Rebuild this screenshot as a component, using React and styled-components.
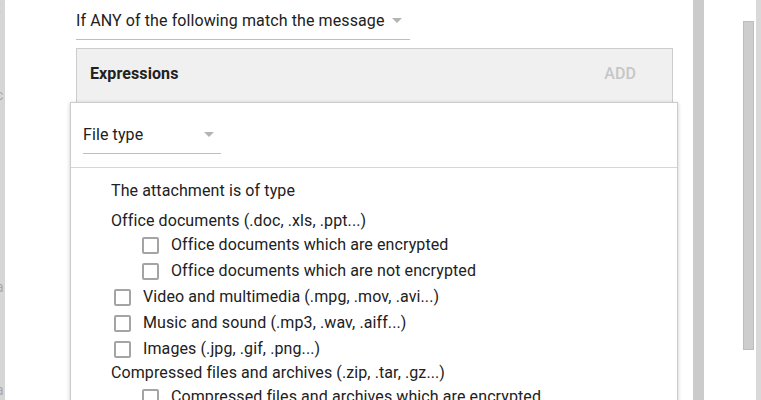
import styled, { createGlobalStyle } from "styled-components"

const Global = createGlobalStyle`
  html, body {
    margin: 0;
    padding: 0;
    background: #ffffff;
    font-family: Roboto, "Liberation Sans", sans-serif;
    color: #212121;
  }
`

const Screen = styled.div`
  display: flex;
  height: 400px;
  width: 761px;
  overflow: hidden;
`

const BackPage = styled.div`
  width: 5px;
  flex-shrink: 0;
  background: #d6d6d6;
  overflow: hidden;
  display: flex;
  flex-direction: column;
`

const Ghost = styled.span`
  display: block;
  margin-top: ${p => p.$top}px;
  margin-left: -4px;
  font-size: 14px;
  line-height: 14px;
  color: #a8a8a8;
  white-space: nowrap;
`

const Dialog = styled.div`
  flex: 1;
  background: #ffffff;
  padding: 8px 0 0 71px;
  overflow: hidden;
  letter-spacing: 0.1px;
`

const Select = styled.div`
  width: ${p => p.$width}px;
  display: flex;
  align-items: center;
  justify-content: space-between;
  padding: 1px ${p => p.$arrowGap}px 6px 0;
  box-sizing: border-box;
  font-size: 16px;
  line-height: 24px;
  border-bottom: 1px solid #bdbdbd;
  color: #212121;
`

const Arrow = styled.span`
  width: 0;
  height: 0;
  border-left: 5px solid transparent;
  border-right: 5px solid transparent;
  border-top: 5px solid #b4b4b4;
  margin-top: -2px;
`

const Expressions = styled.div`
  margin-top: 8px;
  width: 597px;
  box-sizing: border-box;
  background: #f0f0f0;
  border: 1px solid #cccccc;
  border-bottom: none;
  height: 400px;
`

const ExprHeader = styled.div`
  display: flex;
  justify-content: space-between;
  padding: 13px 36px 16px 13px;
  font-size: 16px;
  line-height: 24px;
`

const ExprTitle = styled.span`
  font-weight: 700;
  color: #212121;
`

const AddButton = styled.span`
  font-weight: 500;
  color: #c6c6c6;
`

const Popup = styled.div`
  margin: 0 -6px 0 -7px;
  background: #ffffff;
  border: 1px solid #cccccc;
  box-shadow: 0 1px 4px rgba(0, 0, 0, 0.22);
  height: 400px;
`

const PopupHeader = styled.div`
  padding: 19px 0 13px 12px;
  border-bottom: 1px solid #d6d6d6;
`

const Options = styled.div`
  display: flex;
  flex-direction: column;
  padding: 11px 0 0 40px;
  font-size: 16px;
  line-height: 24px;
`

const Title = styled.div`
  margin-bottom: 6px;
`

const GroupLabel = styled.div``

const CheckList = styled.div`
  display: flex;
  flex-direction: column;
  gap: 2px;
  padding-left: ${p => p.$indent}px;
  margin-top: ${p => p.$top || 0}px;
`

const CheckRow = styled.label`
  display: flex;
  align-items: center;
  gap: 12px;
  height: 24px;
`

const Box = styled.span`
  width: 17px;
  height: 17px;
  box-sizing: border-box;
  border: 2px solid #a4a4a4;
  border-radius: 2px;
  flex-shrink: 0;
`

const Track = styled.div`
  width: 11px;
  flex-shrink: 0;
  background: #cbcbcb;
`

const Gutter = styled.div`
  width: 52px;
  flex-shrink: 0;
  background: #ffffff;
  display: flex;
  justify-content: flex-end;
  padding: 21px 2px 0 0;
  box-sizing: border-box;
`

const Thumb = styled.div`
  width: 11px;
  height: 329px;
  box-sizing: border-box;
  background: #cdcdcd;
  border: 1px solid #bdbdbd;
`

const EdgeStrip = styled.div`
  width: 5px;
  flex-shrink: 0;
  background: #d9d9d9;
`

const Check = ({ children }) => (
  <CheckRow>
    <Box />
    <span>{children}</span>
  </CheckRow>
)

export default function App() {
  return (
    <>
      <Global />
      <Screen>
        <BackPage>
          <Ghost $top={0}>t</Ghost>
          <Ghost $top={26}>l</Ghost>
          <Ghost $top={9}>i</Ghost>
          <Ghost $top={11}>c</Ghost>
          <Ghost $top={41}>-</Ghost>
          <Ghost $top={3}>-</Ghost>
          <Ghost $top={106}>a</Ghost>
          <Ghost $top={89}>a</Ghost>
        </BackPage>
        <Dialog>
          <Select $width={334} $arrowGap={8}>
            If ANY of the following match the message
            <Arrow />
          </Select>
          <Expressions>
            <ExprHeader>
              <ExprTitle>Expressions</ExprTitle>
              <AddButton>ADD</AddButton>
            </ExprHeader>
            <Popup>
              <PopupHeader>
                <Select $width={138} $arrowGap={7}>
                  File type
                  <Arrow />
                </Select>
              </PopupHeader>
              <Options>
                <Title>The attachment is of type</Title>
                <GroupLabel>Office documents (.doc, .xls, .ppt...)</GroupLabel>
                <CheckList $indent={31}>
                  <Check>Office documents which are encrypted</Check>
                  <Check>Office documents which are not encrypted</Check>
                </CheckList>
                <CheckList $indent={3} $top={2}>
                  <Check>Video and multimedia (.mpg, .mov, .avi...)</Check>
                  <Check>Music and sound (.mp3, .wav, .aiff...)</Check>
                  <Check>Images (.jpg, .gif, .png...)</Check>
                </CheckList>
                <GroupLabel>Compressed files and archives (.zip, .tar, .gz...)</GroupLabel>
                <CheckList $indent={31}>
                  <Check>Compressed files and archives which are encrypted</Check>
                  <Check>Compressed files and archives which are not encrypted</Check>
                </CheckList>
              </Options>
            </Popup>
          </Expressions>
        </Dialog>
        <Track />
        <Gutter>
          <Thumb />
        </Gutter>
        <EdgeStrip />
      </Screen>
    </>
  )
}
